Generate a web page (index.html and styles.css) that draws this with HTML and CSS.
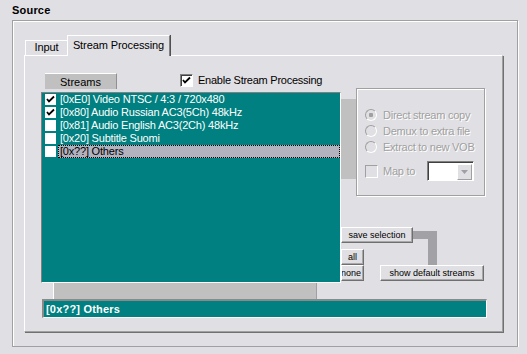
FILE: index.html
```html
<!DOCTYPE html>
<html>
<head>
    <link rel="stylesheet" href="styles.css">
</head>
<body>
    <div class="title">Source</div>
    <div class="group">
        <div class="tabs">
            <div class="tab">Input</div>
            <div class="tab active">Stream Processing</div>
        </div>
        <div class="panel">
            <div class="main">
                <div class="left">
                    <div class="head">
                        <div class="colhead">Streams</div>
                        <div class="enable">
                            <span class="chk">
                                <svg width="11" height="11" viewBox="0 0 11 11"><path d="M2 5 L4 7.5 L9 2.5" fill="none" stroke="#000" stroke-width="1.8"/></svg>
                            </span>
                            Enable Stream Processing
                        </div>
                    </div>
                    <div class="list">
                        <div class="row">
                            <span class="box"><svg width="11" height="11" viewBox="0 0 11 11"><path d="M2 5 L4 7.5 L9 2.5" fill="none" stroke="#000" stroke-width="1.8"/></svg></span>
                            <span class="lbl">[0xE0] Video NTSC / 4:3 / 720x480</span>
                        </div>
                        <div class="row">
                            <span class="box"><svg width="11" height="11" viewBox="0 0 11 11"><path d="M2 5 L4 7.5 L9 2.5" fill="none" stroke="#000" stroke-width="1.8"/></svg></span>
                            <span class="lbl">[0x80] Audio Russian AC3(5Ch) 48kHz</span>
                        </div>
                        <div class="row">
                            <span class="box"></span>
                            <span class="lbl">[0x81] Audio English AC3(2Ch) 48kHz</span>
                        </div>
                        <div class="row">
                            <span class="box"></span>
                            <span class="lbl">[0x20] Subtitle Suomi</span>
                        </div>
                        <div class="row">
                            <span class="box"></span>
                            <span class="lbl sel">[0x??] Others</span>
                        </div>
                    </div>
                </div>
                <div class="right">
                    <div class="optrow">
                        <div class="stub"></div>
                        <div class="options">
                            <div class="opt"><span class="radio on"></span>Direct stream copy</div>
                            <div class="opt"><span class="radio"></span>Demux to extra file</div>
                            <div class="opt"><span class="radio"></span>Extract to new VOB</div>
                            <div class="maprow">
                                <span class="dchk"></span>Map to
                                <div class="combo">
                                    <div class="drop">
                                        <svg width="7" height="4" viewBox="0 0 7 4"><path d="M0 0 H7 L3.5 4 Z" fill="#a0a0a0"/></svg>
                                    </div>
                                </div>
                            </div>
                        </div>
                    </div>
                    <div class="btns">
                        <div class="btn save">save selection</div>
                        <div class="link"></div>
                        <div class="btn all">all</div>
                        <div class="btn none">none</div>
                        <div class="btn show">show default streams</div>
                    </div>
                </div>
            </div>
            <div class="hscroll"></div>
            <div class="status">[0x??] Others</div>
        </div>
    </div>
</body>
</html>
```

FILE: styles.css
```css
body {
    margin: 0;
    background-color: #e0dfe3;
    font-family: "Liberation Sans", Arial, sans-serif;
    font-size: 11px;
    color: #000;
}
.title {
    font-weight: bold;
    line-height: 13px;
    padding: 4px 0 0 12px;
    letter-spacing: 0.2px;
}
.group {
    margin: 3px 0 0 12px;
    width: 506px;
    height: 327px;
    box-sizing: border-box;
    border: 1px solid #a0a0a0;
    box-shadow: inset 1px 1px 0 #fff, 1px 1px 0 #fff;
    padding-top: 14px;
}
.tabs {
    display: flex;
    align-items: flex-end;
    height: 21px;
    margin-left: 12px;
    letter-spacing: -0.1px;
}
.tab {
    width: 42px;
    height: 16px;
    box-sizing: border-box;
    border-top: 1px solid #fff;
    border-left: 1px solid #fff;
    text-align: center;
    line-height: 13px;
}
.tab.active {
    position: relative;
    z-index: 1;
    width: 103px;
    height: 21px;
    padding-top: 3px;
    background-color: #e0dfe3;
    border-right: 1px solid #808080;
    box-shadow: 1px 0 0 #505050;
}
.panel {
    margin: -1px 0 0 11px;
    width: 479px;
    height: 277px;
    box-sizing: border-box;
    border-top: 1px solid #fff;
    border-left: 1px solid #fff;
    border-right: 1px solid #a0a0a0;
    border-bottom: 1px solid #a0a0a0;
    box-shadow: 1px 1px 0 #707070;
}
.main {
    display: flex;
    margin: 17px 0 0 16px;
}
.left {
    width: 300px;
}
.head {
    display: flex;
    height: 19px;
}
.colhead {
    margin-left: 4px;
    width: 72px;
    height: 16px;
    box-sizing: border-box;
    background-color: #c0c0c0;
    border-top: 1px solid #fff;
    border-right: 1px solid #909090;
    text-align: center;
    line-height: 14px;
    padding-top: 1px;
}
.enable {
    display: flex;
    align-items: center;
    height: 15px;
    margin-left: 63px;
    line-height: 13px;
    white-space: nowrap;
    letter-spacing: -0.25px;
}
.chk {
    width: 13px;
    height: 13px;
    box-sizing: border-box;
    margin-right: 5px;
    background-color: #fff;
    border: 1px solid;
    border-color: #808080 #fff #fff #808080;
    box-shadow: inset 1px 1px 0 #404040;
}
.chk svg {
    display: block;
}
.list {
    height: 191px;
    box-sizing: border-box;
    background-color: #008080;
    color: #fff;
    border: 1px solid;
    border-color: #808080 #fff #fff #808080;
    letter-spacing: -0.2px;
}
.row {
    display: flex;
    align-items: center;
    height: 13px;
}
.box {
    flex: none;
    width: 11px;
    height: 11px;
    margin-left: 3px;
    background-color: #fff;
}
.box svg {
    display: block;
}
.lbl {
    flex: 1;
    margin-left: 2px;
    padding-left: 2px;
    line-height: 13px;
    white-space: nowrap;
}
.lbl.sel {
    background-color: #b2b2be;
    color: #000;
    outline: 1px dotted #000;
    outline-offset: -1px;
}
.right {
    flex: 1;
}
.optrow {
    display: flex;
    margin-top: 15px;
}
.stub {
    margin-top: 11px;
    width: 15px;
    height: 80px;
    background-color: #c0c0c0;
}
.options {
    width: 129px;
    height: 108px;
    box-sizing: border-box;
    border: 1px solid #a0a0a0;
    box-shadow: inset 1px 1px 0 #fff, 1px 1px 0 #fff;
    padding: 18px 10px 0 8px;
    color: #a0a0a0;
    text-shadow: 1px 1px 0 #fff;
    letter-spacing: -0.25px;
}
.opt {
    display: flex;
    align-items: center;
    height: 16px;
    white-space: nowrap;
}
.radio {
    flex: none;
    width: 12px;
    height: 12px;
    box-sizing: border-box;
    margin-right: 6px;
    border-radius: 50%;
    border: 1px solid;
    border-color: #a0a0a0 #fff #fff #a0a0a0;
}
.radio.on {
    background: radial-gradient(circle, #a0a0a0 2px, transparent 2.5px);
}
.maprow {
    display: flex;
    align-items: center;
    height: 20px;
    margin-top: 6px;
}
.dchk {
    flex: none;
    width: 13px;
    height: 13px;
    box-sizing: border-box;
    margin-right: 5px;
    border: 1px solid;
    border-color: #a0a0a0 #fff #fff #a0a0a0;
}
.combo {
    display: flex;
    justify-content: flex-end;
    align-items: center;
    margin-left: auto;
    width: 47px;
    height: 20px;
    box-sizing: border-box;
    background-color: #fff;
    border: 1px solid;
    border-color: #808080 #fff #fff #808080;
    box-shadow: inset 1px 1px 0 #404040;
    padding-right: 1px;
}
.drop {
    display: flex;
    align-items: center;
    justify-content: center;
    width: 15px;
    height: 16px;
    box-sizing: border-box;
    margin-top: 1px;
    background-color: #e0dfe3;
    border: 1px solid;
    border-color: #fff #a0a0a0 #a0a0a0 #fff;
}
.btns {
    display: grid;
    grid-template-columns: 23px 16px 33px 71px;
    grid-template-rows: 16px 6px 16px 16px;
    margin-top: 31px;
}
.btn {
    display: flex;
    align-items: center;
    justify-content: center;
    box-sizing: border-box;
    overflow: hidden;
    white-space: nowrap;
    font-size: 9px;
    background-color: #e0dfe3;
    border: 1px solid;
    border-color: #fff #6f6f6f #6f6f6f #fff;
    box-shadow: inset -1px -1px 0 #a8a8a8;
}
.save {
    grid-column: 1 / 4;
    grid-row: 1;
}
.all {
    grid-column: 1;
    grid-row: 3;
}
.none {
    grid-column: 1;
    grid-row: 4;
    justify-content: flex-end;
    padding-right: 2px;
}
.show {
    grid-column: 3 / 5;
    grid-row: 4;
}
.link {
    grid-column: 4;
    grid-row: 1 / 4;
    margin-top: 4px;
    width: 24px;
    height: 34px;
    box-sizing: border-box;
    border-top: 8px solid #a1a1a6;
    border-right: 9px solid #a1a1a6;
}
.hscroll {
    margin-left: 28px;
    width: 264px;
    height: 16px;
    box-sizing: border-box;
    background-color: #c0c0c0;
    border-left: 1px solid #fff;
    border-right: 1px solid #a0a0a0;
}
.status {
    margin-left: 17px;
    width: 445px;
    height: 19px;
    box-sizing: border-box;
    background-color: #008080;
    color: #fff;
    font-weight: bold;
    line-height: 16px;
    padding-left: 2px;
    letter-spacing: 0.2px;
    border-style: solid;
    border-width: 2px 1px 1px 2px;
    border-color: #8a8a8a #fff #fff #8a8a8a;
}
```
